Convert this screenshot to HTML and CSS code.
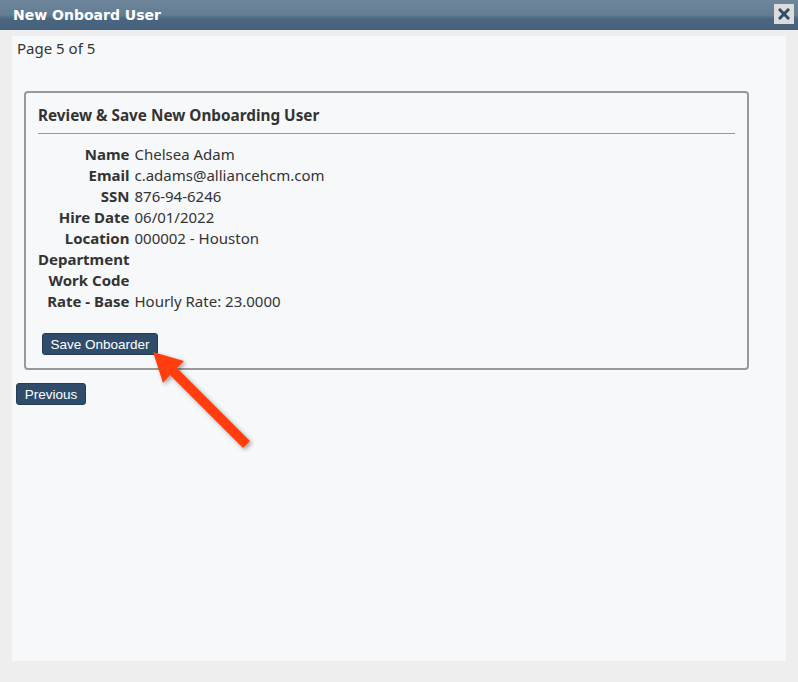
FILE: index.html
```html
<!DOCTYPE html>
<html lang="en">
<head>
    <meta charset="UTF-8">
    <title>New Onboard User</title>
    <link rel="stylesheet" href="styles.css">
</head>
<body>
    <div class="dialog">
        <!-- barre de titre -->
        <div class="titlebar">
            <span class="title">New Onboard User</span>
            <button class="close" title="Close">
                <svg width="12" height="12" viewBox="0 0 12 12">
                    <path d="M2 2 L10 10 M10 2 L2 10" stroke="#2f4d6b" stroke-width="3" stroke-linecap="square"/>
                </svg>
            </button>
        </div>
        <div class="content">
            <div class="panel">
                <div class="pager">Page 5 of 5</div>
                <div class="card">
                    <h2>Review &amp; Save New Onboarding User</h2>
                    <table class="review">
                        <tr><th>Name</th><td>Chelsea Adam</td></tr>
                        <tr><th>Email</th><td>c.adams@alliancehcm.com</td></tr>
                        <tr><th>SSN</th><td>876-94-6246</td></tr>
                        <tr><th>Hire Date</th><td>06/01/2022</td></tr>
                        <tr><th>Location</th><td>000002 - Houston</td></tr>
                        <tr><th>Department</th><td></td></tr>
                        <tr><th>Work Code</th><td></td></tr>
                        <tr><th>Rate - Base</th><td>Hourly Rate: 23.0000</td></tr>
                    </table>
                    <button class="btn save">Save Onboarder</button>
                </div>
                <button class="btn prev">Previous</button>
            </div>
        </div>
        <!-- fleche rouge -->
        <svg class="arrow" width="798" height="682" viewBox="0 0 798 682">
            <defs>
                <filter id="ombre" x="-20%" y="-20%" width="140%" height="140%">
                    <feDropShadow dx="2" dy="2" stdDeviation="2" flood-color="#000" flood-opacity="0.35"/>
                </filter>
            </defs>
            <polygon filter="url(#ombre)" fill="#ff3d10"
                points="153,352 184,361 177,368 250,441 243,448 170,375 163,383"/>
        </svg>
    </div>
</body>
</html>
```

FILE: styles.css
```css
body {
    margin: 0;
    font-family: "Noto Sans", "Open Sans", sans-serif;
    font-size: 15px;
    color: #333;
    background: #eeeeee;
}
.dialog {
    position: relative;
    width: 798px;
    height: 682px;
    overflow: hidden;
}
/* barre de titre */
.titlebar {
    height: 30px;
    display: flex;
    align-items: center;
    justify-content: space-between;
    padding: 0 4px 0 13px;
    box-sizing: border-box;
    background: linear-gradient(to bottom, #6d869b 0%, #647d93 50%, #4b6681 62%, #45607b 100%);
}
.title {
    color: #fff;
    font-family: "DejaVu Sans", sans-serif;
    font-weight: bold;
    font-size: 14px;
}
.close {
    width: 20px;
    height: 20px;
    margin-top: -2px;
    padding: 0;
    border: 0;
    background: #dcdcdc;
    display: flex;
    align-items: center;
    justify-content: center;
}
.content {
    padding: 6px 12px 21px 12px;
}
.panel {
    background: #f7f8fa;
    height: 625px;
    padding: 2px 0 0 5px;
    box-sizing: border-box;
}
.pager {
    line-height: 20px;
}
/* carte de revision */
.card {
    margin: 33px 0 0 7px;
    width: 725px;
    height: 279px;
    box-sizing: border-box;
    border: 2px solid #999;
    border-radius: 4px;
    padding: 0 12px 0 12px;
}
.card h2 {
    margin: 0;
    padding: 12px 0 8px 0;
    font-size: 15.3px;
    font-weight: bold;
    border-bottom: 1px solid #999;
    line-height: 20px;
}
.review {
    border-spacing: 0;
    margin-top: 10px;
}
.review th {
    text-align: right;
    font-weight: bold;
    padding: 0 5px 0 0;
    height: 21px;
    line-height: 21px;
}
.review td {
    padding: 0;
    line-height: 21px;
}
.btn {
    font-family: "Liberation Sans", Arial, sans-serif;
    font-size: 13.5px;
    color: #fff;
    background: #2f4d6b;
    border: 1px solid #243c54;
    border-radius: 3px;
    height: 22px;
    padding: 0;
    white-space: nowrap;
    cursor: pointer;
}
.save {
    margin: 21px 0 0 4px;
    width: 116px;
}
.prev {
    margin-top: 13px;
    margin-left: -1px;
    width: 70px;
}
.arrow {
    position: absolute;
    left: 0;
    top: 0;
    pointer-events: none;
}
```
